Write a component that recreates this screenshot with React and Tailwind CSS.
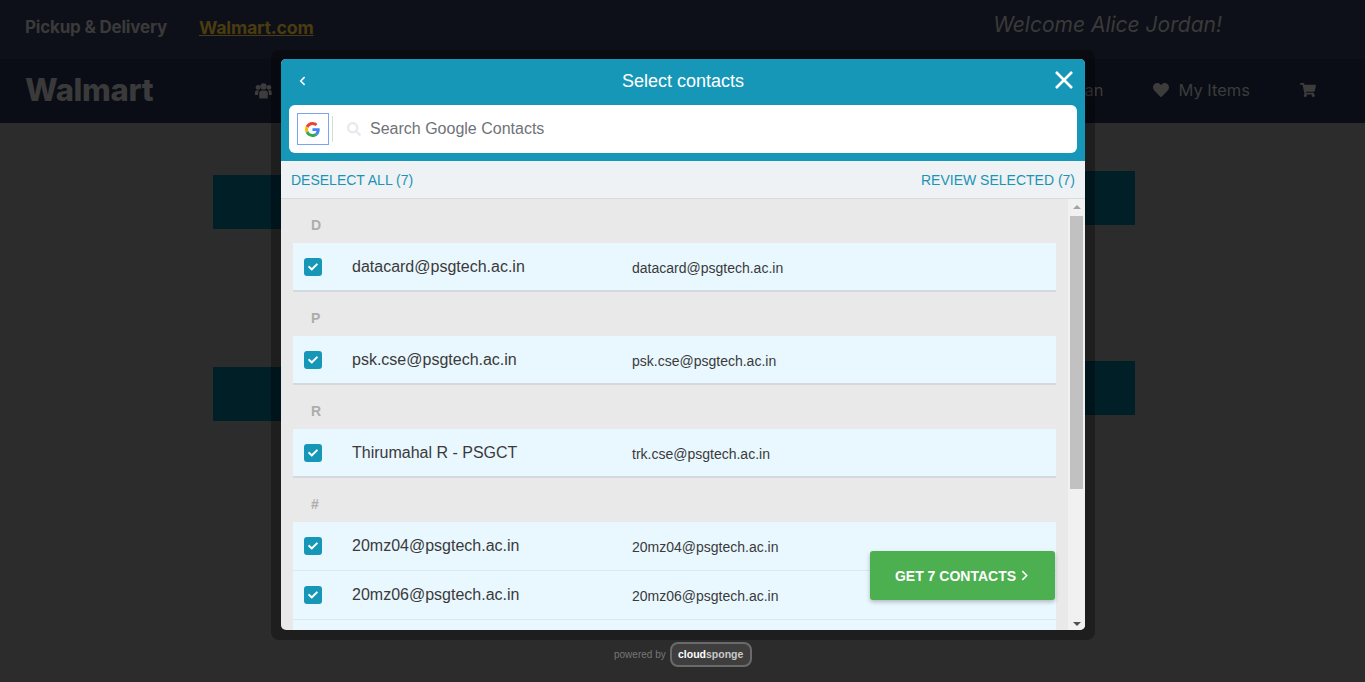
import { FaHeart, FaShoppingCart, FaCheck, FaSearch } from 'react-icons/fa'

const sections = [
  { letter: 'D', rows: [{ name: 'datacard@psgtech.ac.in', email: 'datacard@psgtech.ac.in' }] },
  { letter: 'P', rows: [{ name: 'psk.cse@psgtech.ac.in', email: 'psk.cse@psgtech.ac.in' }] },
  { letter: 'R', rows: [{ name: 'Thirumahal R - PSGCT', email: 'trk.cse@psgtech.ac.in' }] },
  {
    letter: '#',
    more: true,
    rows: [
      { name: '20mz04@psgtech.ac.in', email: '20mz04@psgtech.ac.in' },
      { name: '20mz06@psgtech.ac.in', email: '20mz06@psgtech.ac.in' },
    ],
  },
]

function GoogleG() {
  return (
    <svg viewBox="0 0 48 48" className="w-[15px] h-[15px]">
      <path fill="#EA4335" d="M24 9.5c3.54 0 6.71 1.22 9.21 3.6l6.85-6.85C35.9 2.38 30.47 0 24 0 14.62 0 6.51 5.38 2.56 13.22l7.98 6.19C12.43 13.72 17.74 9.5 24 9.5z" />
      <path fill="#4285F4" d="M46.98 24.55c0-1.57-.15-3.09-.38-4.55H24v9.02h12.94c-.58 2.96-2.26 5.48-4.78 7.18l7.73 6c4.51-4.18 7.09-10.36 7.09-17.65z" />
      <path fill="#FBBC05" d="M10.53 28.59c-.48-1.45-.76-2.99-.76-4.59s.27-3.14.76-4.59l-7.98-6.19C.92 16.46 0 20.12 0 24c0 3.88.92 7.54 2.56 10.78l7.97-6.19z" />
      <path fill="#34A853" d="M24 48c6.48 0 11.93-2.13 15.89-5.81l-7.73-6c-2.15 1.45-4.92 2.3-8.16 2.3-6.26 0-11.57-4.22-13.47-9.91l-7.98 6.19C6.51 42.62 14.62 48 24 48z" />
    </svg>
  )
}

function GroupIcon() {
  return (
    <svg viewBox="0 0 17 16" className="ml-[102px] w-[17px] h-4 -mt-px" fill="currentColor">
      <circle cx="3" cy="4.4" r="2.4" />
      <circle cx="14" cy="4.4" r="2.4" />
      <circle cx="8.5" cy="3.4" r="3.2" />
      <path d="M0 12V9.5C0 8 1 7.3 2.3 7.3H4C3.4 8 3.2 8.8 3.2 9.8V12H0Z" />
      <path d="M17 12V9.5C17 8 16 7.3 14.7 7.3H13C13.6 8 13.8 8.8 13.8 9.8V12H17Z" />
      <path d="M4.2 15.5V10C4.2 8.4 5.3 7.4 6.8 7.4H10.2C11.7 7.4 12.8 8.4 12.8 10V15.5H4.2Z" />
    </svg>
  )
}

function ContactRow({ name, email, last }) {
  return (
    <div className={`flex items-center h-[49px] pl-[11px] ${last ? 'border-b-2 border-[#d3d9dd]' : 'border-b border-[#dce8ee]'}`}>
      <span className="w-[18px] h-[18px] rounded-[3px] bg-[#1797b8] flex items-center justify-center text-white shrink-0">
        <FaCheck className="w-[10px] h-[10px]" />
      </span>
      <span className="ml-[30px] w-[280px] shrink-0 text-[16px] leading-5 text-[#3a3a3a]">{name}</span>
      <span className="text-[14px] leading-5 text-[#3a3a3a] mt-[2px]">{email}</span>
    </div>
  )
}

function Page() {
  return (
    <div className="h-[682px] overflow-hidden bg-[#2c2c2c] font-['Inter',sans-serif]">
      <div className="h-[59px] bg-[#0d1018] flex items-center pl-[25px] pr-[143px]">
        <span className="text-[17px] font-bold text-[#3a3a3a] tracking-[-0.2px] mt-[-3px]">Pickup &amp; Delivery</span>
        <span className="ml-[32px] text-[17.8px] font-bold text-[#4a3c10] underline tracking-[-0.2px] mt-[-3px]">Walmart.com</span>
        <span className="ml-auto text-[21px] italic text-[#3a3a3a] mt-[-10px]">Welcome Alice Jordan!</span>
      </div>
      <div className="h-[64px] bg-[#0a0d16] flex items-center pl-[25px] pr-[49px] text-[#3c3c3c]">
        <span className="text-[31px] font-extrabold tracking-[-0.3px] text-[#3a3a3a] -mt-[2px]">Walmart</span>
        <GroupIcon />
        <div className="ml-auto flex items-center gap-[50px] -mt-[2px]">
          <span className="text-[16.5px]">Meal Plan</span>
          <span className="flex items-center gap-[9px] text-[16.5px]">
            <FaHeart className="w-4 h-4" />
            My Items
          </span>
          <FaShoppingCart className="w-4 h-4" />
        </div>
      </div>
      <div className="flex flex-col gap-[132px] pl-[213px] pr-[230px] pt-[48px]">
        <div className="flex justify-between items-start">
          <div className="w-[300px] h-[54px] mt-[4px] bg-[#001f27]" />
          <div className="w-[300px] h-[54px] bg-[#001f27]" />
        </div>
        <div className="flex justify-between items-start">
          <div className="w-[300px] h-[54px] mt-[6px] bg-[#001f27]" />
          <div className="w-[300px] h-[54px] bg-[#001f27]" />
        </div>
      </div>
    </div>
  )
}

function Modal() {
  return (
    <div className="absolute left-[271px] top-[50px] w-[824px] h-[590px] rounded-lg bg-[#0000004d] pt-[9px] px-[10px] pb-[10px] font-['Liberation_Sans',Arial,sans-serif]">
      <div className="relative h-full rounded-[5px] overflow-hidden flex flex-col bg-[#e9e9e9]">
        <div className="h-[102px] shrink-0 bg-[#1797b8] px-2 flex flex-col">
          <div className="relative h-[46px] flex items-center justify-center text-white">
            <svg viewBox="0 0 10 14" className="absolute left-[10px] top-[17px] w-[7px] h-[10px]" fill="none" stroke="currentColor" strokeWidth="2.2">
              <path d="M8 1.5 L2.5 7 L8 12.5" />
            </svg>
            <span className="text-[18px] font-medium text-white -mt-[2px]">Select contacts</span>
            <svg viewBox="0 0 18 18" className="absolute right-[4px] top-[12px] w-[18px] h-[18px]" stroke="currentColor" strokeWidth="2.6">
              <path d="M1 1 L17 17 M17 1 L1 17" />
            </svg>
          </div>
          <div className="h-[48px] bg-white rounded-[6px] flex items-center pl-2">
            <span className="w-8 h-8 border border-[#7ba5f0] flex items-center justify-center pr-px">
              <GoogleG />
            </span>
            <span className="ml-[3px] w-px h-[26px] bg-[#d9d9d9]" />
            <FaSearch className="ml-[14px] w-[14px] h-[14px] text-[#e6eaee]" />
            <span className="ml-[9px] text-[16px] text-[#6f7378]">Search Google Contacts</span>
          </div>
        </div>
        <div className="h-[38px] shrink-0 bg-[#eef2f5] border-b border-[#d8dcdf] flex items-center justify-between pl-[10px] pr-[10px] pt-[2px] text-[14px] text-[#1b94b3]">
          <span>DESELECT ALL (7)</span>
          <span>REVIEW SELECTED (7)</span>
        </div>
        <div className="relative flex-1 min-h-0 flex">
          <div className="flex-1 overflow-hidden pl-3 pr-3">
            {sections.map((s) => (
              <div key={s.letter}>
                <div className="h-[44px] flex items-center pl-[18px] pt-[8px] text-[14px] font-bold text-[#adadad]">{s.letter}</div>
                <div className="bg-[#e9f7ff]">
                  {s.rows.map((r, i) => (
                    <ContactRow key={r.name} {...r} last={!s.more && i === s.rows.length - 1} />
                  ))}
                  {s.more && <div className="h-[49px]" />}
                </div>
              </div>
            ))}
          </div>
          <div className="w-[17px] shrink-0 bg-[#f1f1f1] flex flex-col items-center">
            <span className="mt-[6px] w-0 h-0 border-x-[4px] border-x-transparent border-b-[4px] border-b-[#a3a3a3]" />
            <span className="mt-[7px] w-[13px] h-[273px] bg-[#c1c1c1]" />
            <span className="mt-auto mb-[4px] w-0 h-0 border-x-[4px] border-x-transparent border-t-[4px] border-t-[#505050]" />
          </div>
          <button className="absolute left-[589px] top-[352px] w-[185px] h-[49px] rounded-[3px] bg-[#4caf50] text-white text-[14px] font-bold shadow-[0_2px_4px_rgba(0,0,0,0.25)] flex items-center justify-center gap-[5px] pr-[2px] pt-[2px]">
            GET 7 CONTACTS
            <svg viewBox="0 0 8 12" className="w-[7px] h-[11px] -mt-[2px]" fill="none" stroke="currentColor" strokeWidth="1.8">
              <path d="M1.5 1 L6.5 6 L1.5 11" />
            </svg>
          </button>
        </div>
      </div>
    </div>
  )
}

export default function App() {
  return (
    <div className="relative h-[682px] overflow-hidden">
      <Page />
      <Modal />
      <div className="absolute left-[614px] top-[642px] flex items-center gap-[4px] font-['Liberation_Sans',Arial,sans-serif]">
        <span className="text-[10px] text-[#777777]">powered by</span>
        <span className="h-[25px] w-[82px] rounded-[8px] border-2 border-[#6a6a6a] bg-[#3e3e3e] flex items-center justify-center text-[10.5px] font-bold text-[#c9c9c9]">
          <span className="text-white">cloud</span>sponge
        </span>
      </div>
    </div>
  )
}
